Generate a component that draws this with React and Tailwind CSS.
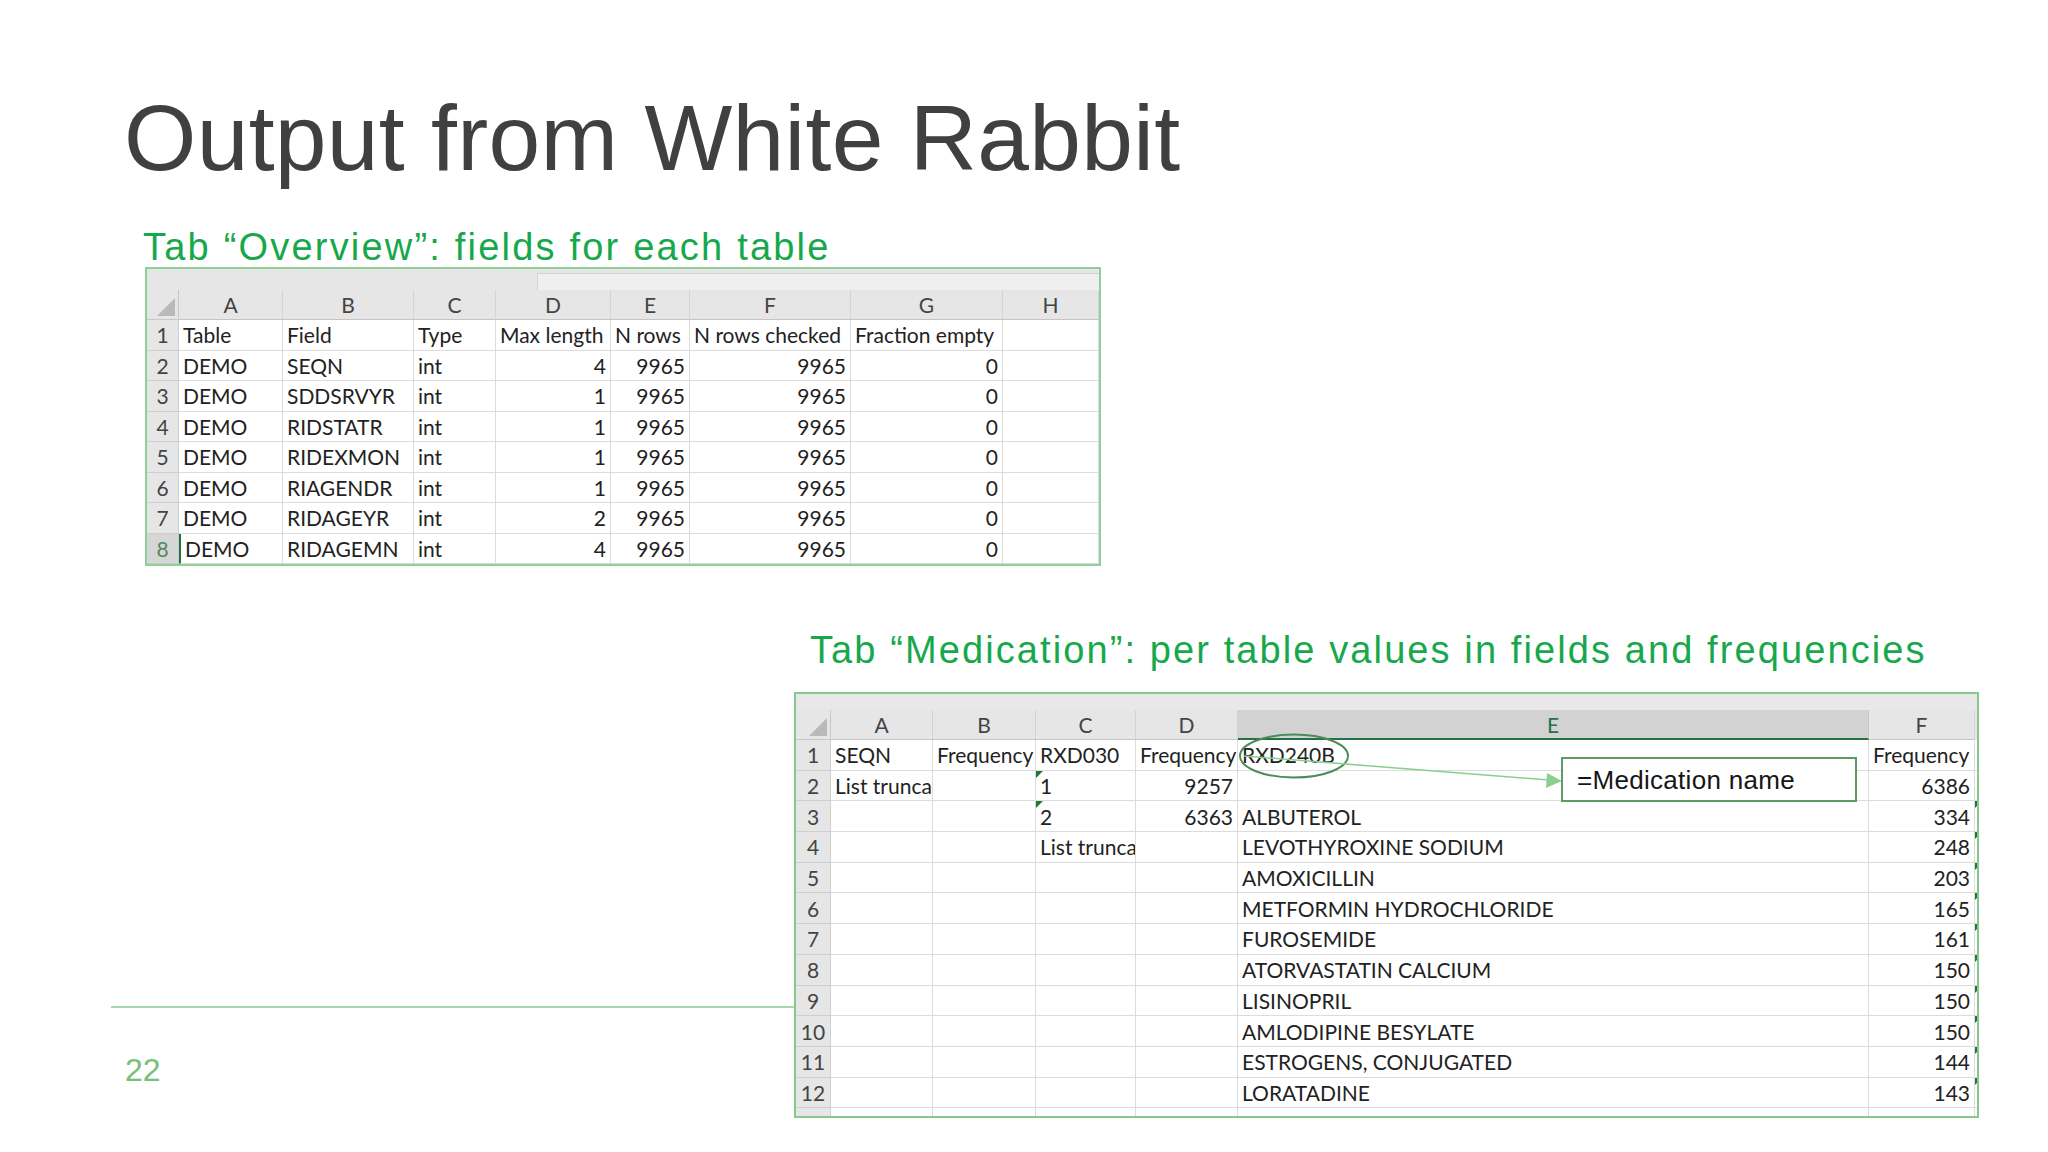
import React from "react";

const overviewRows = [
  ["Table", "Field", "Type", "Max length", "N rows", "N rows checked", "Fraction empty", ""],
  ["DEMO", "SEQN", "int", "4", "9965", "9965", "0", ""],
  ["DEMO", "SDDSRVYR", "int", "1", "9965", "9965", "0", ""],
  ["DEMO", "RIDSTATR", "int", "1", "9965", "9965", "0", ""],
  ["DEMO", "RIDEXMON", "int", "1", "9965", "9965", "0", ""],
  ["DEMO", "RIAGENDR", "int", "1", "9965", "9965", "0", ""],
  ["DEMO", "RIDAGEYR", "int", "2", "9965", "9965", "0", ""],
  ["DEMO", "RIDAGEMN", "int", "4", "9965", "9965", "0", ""],
];

const medRows = [
  ["SEQN", "Frequency", "RXD030", "Frequency", "RXD240B", "Frequency"],
  ["List trunca", "", "1", "9257", "", "6386"],
  ["", "", "2", "6363", "ALBUTEROL", "334"],
  ["", "", "List trunca", "", "LEVOTHYROXINE SODIUM", "248"],
  ["", "", "", "", "AMOXICILLIN", "203"],
  ["", "", "", "", "METFORMIN HYDROCHLORIDE", "165"],
  ["", "", "", "", "FUROSEMIDE", "161"],
  ["", "", "", "", "ATORVASTATIN CALCIUM", "150"],
  ["", "", "", "", "LISINOPRIL", "150"],
  ["", "", "", "", "AMLODIPINE BESYLATE", "150"],
  ["", "", "", "", "ESTROGENS, CONJUGATED", "144"],
  ["", "", "", "", "LORATADINE", "143"],
];

const Flag = () => (
  <span className="absolute left-0 top-0 w-0 h-0 border-t-[7px] border-r-[7px] border-t-[#1d7a36] border-r-transparent" />
);

const Corner = () => (
  <div className="relative bg-[#e6e6e6] border-r border-b border-[#c8c8c8]">
    <svg className="absolute right-[3px] bottom-[3px]" width="18" height="18" viewBox="0 0 18 18">
      <polygon points="18,0 18,18 0,18" fill="#b9b9b9" />
    </svg>
  </div>
);

const ColHead = ({ children, active }) => (
  <div
    className={
      active
        ? "flex items-center justify-center bg-[#d2d2d2] text-[#217346] border-r border-[#c8c8c8] border-b-2 border-b-[#217346]"
        : "flex items-center justify-center bg-[#e6e6e6] text-[#444] border-r border-[#d4d4d4] border-b border-b-[#c4c4c4]"
    }
  >
    {children}
  </div>
);

const RowHead = ({ children, active }) => (
  <div
    className={
      active
        ? "flex items-center justify-center bg-[#d6d6d6] text-[#4f8a62] border-r border-b border-[#c8c8c8]"
        : "flex items-center justify-center bg-[#e6e6e6] text-[#444] border-r border-b border-[#cfcfcf]"
    }
  >
    {children}
  </div>
);

const Cell = ({ children, right, flag, selected }) => (
  <div
    className={
      "relative flex items-center overflow-hidden whitespace-nowrap bg-white border-r border-b border-[#dcdcdc] px-[4px] text-[#222] " +
      (right ? "justify-end " : "") +
      (selected ? "border-l-2 border-l-[#217346] " : "")
    }
  >
    {flag && <Flag />}
    {children}
  </div>
);

function OverviewSheet() {
  const letters = ["A", "B", "C", "D", "E", "F", "G", "H"];
  return (
    <div className="ml-[145px] mt-[1px] w-[956px] h-[299px] border-2 border-[#8fd097] bg-[#e6e6e6] overflow-hidden font-['Lato',sans-serif] text-[21px] leading-none">
      <div className="flex h-[21px]">
        <div className="w-[390px] bg-[#e6e6e6]" />
        <div className="flex-1 mt-[4px] bg-[#efefef] border-t border-l border-[#d2d2d2]" />
      </div>
      <div className="grid grid-cols-[32px_104px_131px_82px_115px_79px_161px_152px_96px] grid-rows-[30px_repeat(8,30.5px)]">
        <Corner />
        {letters.map((l) => (
          <ColHead key={l}>{l}</ColHead>
        ))}
        {overviewRows.map((row, r) => (
          <React.Fragment key={r}>
            <RowHead active={r === 7}>{r + 1}</RowHead>
            {row.map((v, c) => (
              <Cell key={c} right={r > 0 && c >= 3} selected={r === 7 && c === 0}>
                {v}
              </Cell>
            ))}
          </React.Fragment>
        ))}
      </div>
    </div>
  );
}

function MedicationSheet() {
  const letters = ["A", "B", "C", "D", "E", "F"];
  return (
    <div className="relative mt-[23px] w-[1185px] h-[426px] border-2 border-[#86c98c] bg-[#e6e6e6] overflow-hidden font-['Lato',sans-serif] text-[21px] leading-none">
      <div className="h-[16px] bg-[#e8e8e8]" />
      <div className="grid grid-cols-[35px_102px_103px_100px_102px_631px_106px_2px] grid-rows-[30px_repeat(13,30.7px)]">
        <Corner />
        {letters.map((l) => (
          <ColHead key={l} active={l === "E"}>
            {l}
          </ColHead>
        ))}
        <div className="bg-[#e6e6e6]" />
        {medRows.map((row, r) => (
          <React.Fragment key={r}>
            <RowHead>{r + 1}</RowHead>
            {row.map((v, c) => (
              <Cell
                key={c}
                right={r > 0 && (c === 3 || c === 5)}
                flag={c === 2 && (r === 1 || r === 2)}
              >
                {v}
              </Cell>
            ))}
            <div className="relative bg-white border-b border-[#dcdcdc]">{r >= 2 && <Flag />}</div>
          </React.Fragment>
        ))}
        <RowHead />
        {[0, 1, 2, 3, 4, 5, 6].map((c) => (
          <Cell key={c} />
        ))}
      </div>

      <svg className="absolute left-0 top-0 pointer-events-none" width="1185" height="426" viewBox="0 0 1185 426">
        <ellipse cx="498" cy="62" rx="54" ry="21.5" fill="none" stroke="#4e8a58" strokeWidth="2" />
        <line x1="448" y1="62" x2="753" y2="86" stroke="#8bcf8f" strokeWidth="1.6" />
        <polygon points="766,87 751,79 750,94" fill="#8bcf8f" />
      </svg>
      <div className="absolute left-[765px] top-[63px] w-[296px] h-[45px] border-2 border-[#5e9a63] bg-white flex items-center pl-[14px] font-['Liberation_Sans',sans-serif] text-[26px] tracking-[0.3px] text-[#161616]">
        =Medication name
      </div>
    </div>
  );
}

export default function App() {
  return (
    <div className="w-[2048px] h-[1152px] bg-white overflow-hidden font-['Liberation_Sans',Arial,sans-serif]">
      <h1 className="pt-[92px] pl-[124px] text-[93px] leading-[93px] tracking-[0.3px] text-[#404040] font-normal">
        Output from White Rabbit
      </h1>
      <h2 className="mt-[43px] pl-[143px] text-[38px] leading-[38px] tracking-[2.2px] text-[#17a84b] font-normal">
        Tab “Overview”: fields for each table
      </h2>
      <OverviewSheet />
      <div className="flex">
        <div className="w-[794px] shrink-0 pl-[111px]">
          <div className="mt-[440px] h-[2px] bg-[#a9d9aa]" />
          <div className="mt-[46px] pl-[14px] text-[32px] leading-[32px] text-[#74c177]">22</div>
        </div>
        <div>
          <h2 className="mt-[65px] pl-[16px] text-[38px] leading-[38px] tracking-[2.1px] text-[#17a84b] font-normal whitespace-nowrap">
            Tab “Medication”: per table values in fields and frequencies
          </h2>
          <MedicationSheet />
        </div>
      </div>
    </div>
  );
}
